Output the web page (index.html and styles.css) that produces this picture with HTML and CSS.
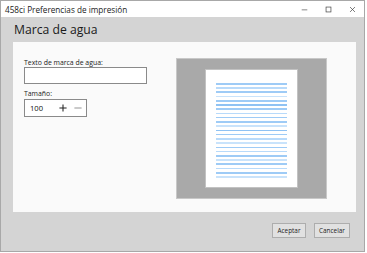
FILE: index.html
```html
<!DOCTYPE html>
<html lang="es">
<head>
<meta charset="utf-8">
<title>458ci Preferencias de impresión</title>
<link rel="stylesheet" href="styles.css">
</head>
<body>
<div class="window">
  <div class="titlebar">
    <span class="title">458ci Preferencias de impresión</span>
    <div class="controls">
      <span class="ctl"><svg width="10" height="10" viewBox="0 0 10 10"><line x1="1" y1="5.5" x2="9" y2="5.5" stroke="#555" stroke-width="1"/></svg></span>
      <span class="ctl"><svg width="10" height="10" viewBox="0 0 10 10"><rect x="1.5" y="1.5" width="7" height="7" fill="none" stroke="#444" stroke-width="1"/></svg></span>
      <span class="ctl"><svg width="10" height="10" viewBox="0 0 10 10"><path d="M1.5 1.5 L8.5 8.5 M8.5 1.5 L1.5 8.5" stroke="#444" stroke-width="1"/></svg></span>
    </div>
  </div>
  <div class="body">
    <h1 class="heading">Marca de agua</h1>
    <div class="panel">
      <div class="form">
        <label class="label">Texto de marca de agua:</label>
        <div class="input"></div>
        <label class="label label2">Tamaño:</label>
        <div class="stepper">
          <span class="value">100</span>
          <span class="btn-plus"><svg width="10" height="10" viewBox="0 0 10 10"><path d="M5 0.5 V9.5 M0.5 5 H9.5" stroke="#222" stroke-width="1.3"/></svg></span>
          <span class="btn-minus"><svg width="10" height="10" viewBox="0 0 10 10"><path d="M0.5 5 H9.5" stroke="#888" stroke-width="1.1"/></svg></span>
        </div>
      </div>
      <div class="preview">
        <div class="page">
          <div class="lines">
            <i class="l a"></i><i class="l b"></i><i class="l a"></i><i class="l c"></i><i class="l a"></i>
            <i class="l d"></i><i class="l a"></i><i class="l b"></i><i class="l a"></i><i class="l a"></i>
            <i class="l c"></i><i class="l d"></i><i class="l a"></i><i class="l b"></i><i class="l c"></i>
            <i class="l a"></i><i class="l b"></i><i class="l a"></i><i class="l c"></i><i class="l a"></i>
            <i class="l b"></i><i class="l a"></i><i class="l c"></i>
          </div>
        </div>
      </div>
    </div>
    <div class="footer">
      <button class="button b-ok">Aceptar</button>
      <button class="button b-cancel">Cancelar</button>
    </div>
  </div>
</div>
</body>
</html>
```
FILE: styles.css
```css
html, body {
  margin: 0;
  padding: 0;
  background: #ffffff;
}
body {
  width: 367px;
  height: 253px;
  overflow: hidden;
  font-family: "Open Sans", "Noto Sans", sans-serif;
  color: #1a1a1a;
}
.window {
  width: 365px;
  height: 252px;
  box-sizing: border-box;
  border: 1px solid #a8a8a8;
  background: #d4d4d4;
  display: flex;
  flex-direction: column;
}
.titlebar {
  height: 16px;
  background: #ffffff;
  display: flex;
  align-items: center;
  padding-left: 4px;
}
.title {
  font-size: 8.2px;
  color: #222;
  flex: 1;
}
.controls {
  display: flex;
  height: 100%;
}
.ctl {
  width: 24px;
  display: flex;
  align-items: center;
  justify-content: center;
}
.ctl svg { width: 7px; height: 7px; }
.body {
  flex: 1;
  display: flex;
  flex-direction: column;
  padding: 0 8px 0 12px;
}
.heading {
  margin: 0;
  height: 25px;
  line-height: 26px;
  font-size: 12.2px;
  font-weight: normal;
  padding-left: 1px;
  color: #1a1a1a;
}
.panel {
  height: 170px;
  box-sizing: border-box;
  background: #fafafa;
  display: flex;
  padding: 16px 29px 0 11px;
}
.form {
  flex: 1;
  display: flex;
  flex-direction: column;
  align-items: flex-start;
}
.label {
  font-size: 6.9px;
  line-height: 9px;
  color: #222;
}
.input {
  width: 123px;
  height: 17px;
  box-sizing: border-box;
  border: 1px solid #8a8a8a;
  background: #fff;
}
.label2 {
  margin-top: 5px;
  margin-bottom: 1px;
}
.stepper {
  width: 63px;
  height: 18px;
  box-sizing: border-box;
  border: 1px solid #8a8a8a;
  background: #fff;
  display: flex;
  align-items: center;
}
.value {
  font-size: 7.6px;
  width: 27px;
  padding-left: 5px;
  color: #111;
}
.btn-plus, .btn-minus {
  width: 16px;
  display: flex;
  align-items: center;
  justify-content: center;
}
.btn-plus svg, .btn-minus svg { width: 8px; height: 8px; }
.preview {
  width: 151px;
  height: 141px;
  box-sizing: border-box;
  border: 1px solid #c8c8c8;
  background: #a9a9a9;
  display: flex;
  align-items: center;
  justify-content: center;
}
.page {
  width: 93px;
  height: 119px;
  box-sizing: border-box;
  background: #ffffff;
  border: 1px solid #c2c2c2;
  padding: 13px 10px 9px 10px;
}
.lines {
  height: 100%;
  display: flex;
  flex-direction: column;
  justify-content: space-between;
}
.l {
  display: block;
  height: 1.6px;
}
.a { background: #9ecbf6; }
.b { background: #b8dafa; }
.c { background: #c9e3fb; }
.d { background: #8fc2f3; }
.footer {
  flex: 1;
  display: flex;
  justify-content: flex-end;
  align-items: flex-start;
  padding-top: 11px;
  padding-right: 6px;
  gap: 8px;
}
.button {
  height: 15px;
  box-sizing: border-box;
  border: 1px solid #adadad;
  background: #e1e1e1;
  font-family: "Open Sans", "Noto Sans", sans-serif;
  font-size: 6.4px;
  color: #222;
  padding: 0;
  margin: 0;
}
.b-ok { width: 34px; }
.b-cancel { width: 36px; }
```
